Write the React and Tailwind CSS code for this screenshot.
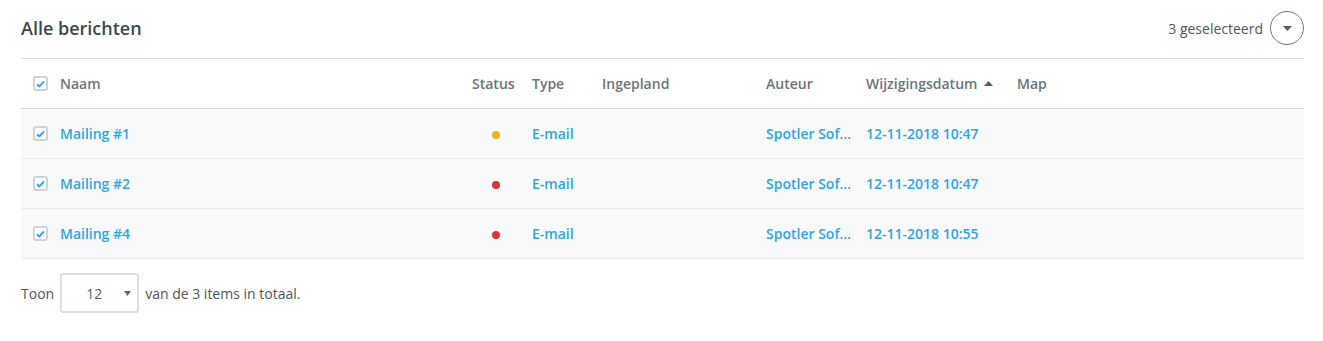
import React from 'react';

const rows = [
  { name: 'Mailing #1', status: 'bg-[#f6b11a]', type: 'E-mail', author: 'Spotler Software', date: '12-11-2018 10:47' },
  { name: 'Mailing #2', status: 'bg-[#d9343b]', type: 'E-mail', author: 'Spotler Software', date: '12-11-2018 10:47' },
  { name: 'Mailing #4', status: 'bg-[#d9343b]', type: 'E-mail', author: 'Spotler Software', date: '12-11-2018 10:55' },
];

const Check = () => (
  <div className="w-[15px] h-[15px] rounded-[3px] border-2 border-[#d0d2d5] bg-white flex items-center justify-center">
    <svg width="9" height="8" viewBox="0 0 9 8">
      <path d="M1 4.2 L3.4 6.4 L8 1.4" fill="none" stroke="#2fa4e7" strokeWidth="2" />
    </svg>
  </div>
);

const App = () => {
  return (
    <div className="bg-white min-h-screen pl-[21px] pr-[19px] pt-[13px] text-[14px]" style={{ fontFamily: '"Open Sans", sans-serif' }}>
      {/* Title bar */}
      <div className="flex items-center justify-between h-[30px] mb-[15px]">
        <h1 className="text-[18px] font-semibold text-[#3c4650]">Alle berichten</h1>
        <div className="flex items-center gap-[7px]">
          <span className="text-[14px] text-[#4d5660]">3 geselecteerd</span>
          <button className="w-[34px] h-[34px] rounded-full border border-[#6f7780] flex items-center justify-center">
            <svg width="9" height="5" viewBox="0 0 9 5"><path d="M0 0 L9 0 L4.5 5 Z" fill="#555d66" /></svg>
          </button>
        </div>
      </div>

      {/* Table */}
      <div className="border-t border-[#d9dcdf]">
        <div className="flex items-center h-[50px] border-b border-[#d5d8dc] font-semibold text-[#6b747d]">
          <div className="w-[39px] pl-[12px]"><Check /></div>
          <div className="w-[412px]">Naam</div>
          <div className="w-[60px]">Status</div>
          <div className="w-[70px]">Type</div>
          <div className="w-[164px]">Ingepland</div>
          <div className="w-[100px]">Auteur</div>
          <div className="w-[151px] flex items-center gap-[7px]">
            Wijzigingsdatum
            <svg width="9" height="5" viewBox="0 0 9 5"><path d="M0 5 L9 5 L4.5 0 Z" fill="#555d66" /></svg>
          </div>
          <div className="flex-1">Map</div>
        </div>
        {rows.map((r) => (
          <div key={r.name} className="flex items-center h-[50px] bg-[#f8f9fb] border-b border-[#e8eaed] font-semibold text-[#2fa4e7]">
            <div className="w-[39px] pl-[12px]"><Check /></div>
            <div className="w-[412px]">{r.name}</div>
            <div className="w-[60px] pl-[20px] pt-[2px]"><div className={`w-[8px] h-[8px] rounded-full ${r.status}`} /></div>
            <div className="w-[70px]">{r.type}</div>
            <div className="w-[164px]"></div>
            <div className="w-[100px]"><div className="w-[88px] truncate">{r.author}</div></div>
            <div className="w-[151px]">{r.date}</div>
            <div className="flex-1"></div>
          </div>
        ))}
      </div>

      {/* Footer */}
      <div className="flex items-center gap-[6px] mt-[14px] text-[14px] text-[#4d5660]">
        <span>Toon</span>
        <div className="w-[79px] h-[40px] border-2 border-[#dcdee0] rounded-[3px] flex items-center justify-between pl-[24px] pr-[6px] text-[#555d66]">
          <span>12</span>
          <svg width="7" height="5" viewBox="0 0 7 5"><path d="M0 0 L7 0 L3.5 5 Z" fill="#666" /></svg>
        </div>
        <span>van de 3 items in totaal.</span>
      </div>
    </div>
  );
};

export default App;
